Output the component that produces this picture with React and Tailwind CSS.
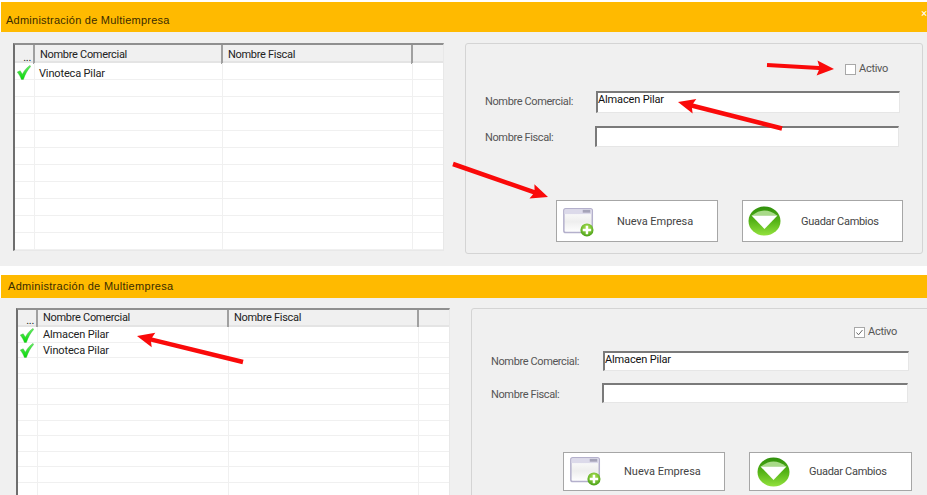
import { useId } from "react";

const font = "font-['Roboto','Liberation_Sans',Arial,sans-serif]";

function WindowPlusIcon({ className }) {
  const id = useId();
  return (
    <svg width="32" height="29" viewBox="0 0 34 31" className={`shrink-0 ${className}`}>
      <defs>
        <linearGradient id={id} x1="0" y1="0" x2="0" y2="1">
          <stop offset="0" stopColor="#ffffff" />
          <stop offset="0.55" stopColor="#eeeeee" />
          <stop offset="1" stopColor="#ffffff" />
        </linearGradient>
        <radialGradient id={id + "g"} cx="0.5" cy="0.35" r="0.7">
          <stop offset="0" stopColor="#b6e85a" />
          <stop offset="1" stopColor="#3f9a10" />
        </radialGradient>
      </defs>
      <rect x="0.8" y="0.8" width="30.4" height="25.4" rx="2" fill={`url(#${id})`} stroke="#b4b0cc" strokeWidth="1.6" />
      <rect x="1.5" y="1.5" width="29" height="5" fill="#dcdaea" />
      <rect x="21" y="2" width="8" height="3" fill="#a5a3b8" />
      <circle cx="25.5" cy="23.5" r="7" fill={`url(#${id}g)`} />
      <path d="M25.5 19v9M21 23.5h9" stroke="#ffffff" strokeWidth="2.6" />
    </svg>
  );
}

function GreenDownIcon() {
  const id = useId();
  return (
    <svg width="33" height="30" viewBox="0 0 33 30" className="shrink-0">
      <defs>
        <linearGradient id={id} x1="0" y1="0" x2="0" y2="1">
          <stop offset="0" stopColor="#2f8f0c" />
          <stop offset="0.5" stopColor="#55b316" />
          <stop offset="1" stopColor="#93e23e" />
        </linearGradient>
      </defs>
      <ellipse cx="16.5" cy="15" rx="16" ry="14.6" fill={`url(#${id})`} />
      <path d="M4 9.5Q16.5 -0.5 29 9.5Z" fill="#a8da88" />
      <path d="M3.5 9.5H29.5L16.5 23Z" fill="#ffffff" />
    </svg>
  );
}

function CheckIcon() {
  const id = useId();
  return (
    <svg width="14" height="15" viewBox="0 0 14 15" className="shrink-0">
      <defs>
        <linearGradient id={id} x1="0" y1="0" x2="0" y2="1">
          <stop offset="0" stopColor="#66f066" />
          <stop offset="1" stopColor="#06d806" />
        </linearGradient>
      </defs>
      <path d="M0.3 7L3.2 5.8L5.4 9.2C7 5.8 9.6 2.6 13 0.4L13.7 1.4C10.6 4.8 8.2 9 6.4 14.4H4.4C3.4 11.6 2 9.2 0.3 7Z" fill={`url(#${id})`} stroke="#30b030" strokeWidth="0.4" />
    </svg>
  );
}

function Arrow({ x1, y1, x2, y2, w = 4, hw = 15, hl = 16 }) {
  const len = Math.hypot(x2 - x1, y2 - y1);
  const ux = (x2 - x1) / len;
  const uy = (y2 - y1) / len;
  const nx = -uy;
  const ny = ux;
  const bx = x2 - ux * hl;
  const by = y2 - uy * hl;
  const pts = [
    [x1 + (nx * w) / 2, y1 + (ny * w) / 2],
    [bx + (nx * w) / 2, by + (ny * w) / 2],
    [bx + (nx * hw) / 2 - ux * 2, by + (ny * hw) / 2 - uy * 2],
    [x2, y2],
    [bx - (nx * hw) / 2 - ux * 2, by - (ny * hw) / 2 - uy * 2],
    [bx - (nx * w) / 2, by - (ny * w) / 2],
    [x1 - (nx * w) / 2, y1 - (ny * w) / 2],
  ];
  return <polygon points={pts.map((p) => p.join(",")).join(" ")} fill="#fa0a0a" />;
}

function TitleBar({ className, textClass, close }) {
  return (
    <div className={`ml-px flex items-center justify-between bg-[#ffba00] ${className}`}>
      <span className={`font-['Liberation_Sans',Arial,sans-serif] text-[11px] text-[#3a2c00] ${textClass}`}>
        Administración de Multiempresa
      </span>
      {close && <span className="mb-2 text-[11px] leading-none text-white">×</span>}
    </div>
  );
}

function DataGrid({ className, rows, rowClass, colsClass, headClass, headTextClass, rowCount, textClass, checkClass }) {
  const empty = Array.from({ length: rowCount - rows.length });
  return (
    <div className={`shrink-0 overflow-hidden border-t-2 border-l-2 border-r border-b border-t-[#8f8f8f] border-l-[#6e6e6e] border-r-[#e8e8e8] border-b-[#e8e8e8] bg-white ${className}`}>
      <div className={`grid ${colsClass} ${headClass} border-b-2 border-[#e4e4e4] bg-[#f0f0f0] text-[11px] tracking-[-0.3px] text-[#222]`}>
        <div className="flex items-end justify-end border-r-2 border-[#a0a0a0] pr-0.5 leading-[13px]">...</div>
        <div className={`flex items-center border-r-2 border-[#a0a0a0] pl-[5px] ${headTextClass}`}>Nombre Comercial</div>
        <div className={`flex items-center border-r-2 border-[#a0a0a0] pl-[5px] ${headTextClass}`}>Nombre Fiscal</div>
        <div />
      </div>
      {rows.map((name) => (
        <div key={name} className={`grid ${colsClass} ${rowClass} border-b border-[#f0f0f0] text-[11px] tracking-[-0.15px] text-[#222]`}>
          <div className={`flex items-center border-r border-[#f0f0f0] ${checkClass}`}><CheckIcon /></div>
          <div className={`flex items-center border-r border-[#f0f0f0] ${textClass}`}>{name}</div>
          <div className="border-r border-[#f0f0f0]" />
          <div />
        </div>
      ))}
      {empty.map((_, i) => (
        <div key={i} className={`grid ${colsClass} ${rowClass} border-b border-[#f0f0f0]`}>
          <div className="border-r border-[#f0f0f0]" />
          <div className="border-r border-[#f0f0f0]" />
          <div className="border-r border-[#f0f0f0]" />
          <div />
        </div>
      ))}
    </div>
  );
}

function Field({ label, value, className, labelClass, inputClass }) {
  return (
    <div className={`flex items-center ${className}`}>
      <span className={`text-[11px] tracking-[-0.38px] text-[#555] ${labelClass}`}>{label}</span>
      <div className={`flex items-center border-t-2 border-l-2 border-r border-b border-t-[#7a7a7a] border-l-[#7a7a7a] border-r-[#e6e6e6] border-b-[#e6e6e6] bg-white text-[11px] tracking-[-0.15px] text-[#111] ${inputClass}`}>
        {value}
      </div>
    </div>
  );
}

function ActionButton({ icon, label, className, labelClass }) {
  return (
    <div className={`flex items-center border border-[#a6a6a6] bg-white text-[11px] text-[#444] ${className}`}>
      {icon}
      <span className={labelClass}>{label}</span>
    </div>
  );
}

function Activo({ checked, className }) {
  return (
    <div className={`flex items-center justify-end gap-[3px] text-[11px] tracking-[-0.3px] text-[#555] ${className}`}>
      <span className="flex h-[11px] w-[11px] items-center justify-center border border-[#a8a8a8] bg-white">
        {checked && (
          <svg width="9" height="9" viewBox="0 0 9 9">
            <path d="M1.5 4.5L3.5 6.8L7.5 2" fill="none" stroke="#666" strokeWidth="1" />
          </svg>
        )}
      </span>
      <span>Activo</span>
    </div>
  );
}

export default function App() {
  return (
    <div className={`relative h-[495px] w-[927px] overflow-hidden bg-white pt-0.5 ${font}`}>
      <TitleBar className="h-[30px]" textClass="pt-1.5 pl-[5px] tracking-[0.24px]" close />
      <div className="flex h-[234px] items-start bg-[#f0f0f0] pt-[11px] pl-[13px]">
        <DataGrid
          className="h-[208px] w-[431px]"
          colsClass="grid-cols-[20px_188px_190px_1fr]"
          headClass="h-[18px]"
          headTextClass="pt-0.5"
          rowClass="h-[17px]"
          textClass="pt-[3px] pl-1"
          checkClass="pl-0.5"
          rows={["Vinoteca Pilar"]}
          rowCount={11}
        />
        <div className="ml-[21px] h-[211px] w-[458px] shrink-0 rounded-[3px] border border-[#d4d4d4] pt-[17px] pl-[19px]">
          <Activo className="mr-[34px]" />
          <Field className="mt-[13px] h-[22px]" label="Nombre Comercial:" value="Almacen Pilar" labelClass="w-[111px] pt-0.5" inputClass="h-[22px] w-[304px] pb-[3px]" />
          <Field className="mt-[13px] h-[21px]" label="Nombre Fiscal:" labelClass="w-[110px] pt-1" inputClass="h-[21px] w-[304px]" />
          <div className="mt-[53px] ml-[71px] flex gap-6">
            <ActionButton className="h-[42px] w-[162px] pl-1.5" icon={<WindowPlusIcon className="mt-[3px]" />} label="Nueva Empresa" labelClass="ml-[22px] pt-[3px] tracking-[-0.05px]" />
            <ActionButton className="h-[42px] w-[161px] pl-[5px]" icon={<GreenDownIcon />} label="Guadar Cambios" labelClass="ml-5 pt-[3px] tracking-[-0.3px]" />
          </div>
        </div>
      </div>

      <div className="h-[9px]" />

      <TitleBar className="h-[23px]" textClass="pl-[7px] tracking-[0.3px]" />
      <div className="flex h-[197px] items-start bg-[#f0f0f0] pt-2.5 pl-4">
        <DataGrid
          className="h-[190px] w-[434px]"
          colsClass="grid-cols-[20px_191px_190px_1fr]"
          headClass="h-[17px]"
          headTextClass="pt-0"
          rowClass="h-[15.6px]"
          textClass="pl-[5px]"
          checkClass="pl-0.5"
          rows={["Almacen Pilar", "Vinoteca Pilar"]}
          rowCount={11}
        />
        <div className="ml-[21px] h-[200px] w-[470px] shrink-0 rounded-[3px] border border-[#d4d4d4] pt-[15px] pl-[19px]">
          <Activo checked className="mr-[43px]" />
          <Field className="mt-2.5 h-5" label="Nombre Comercial:" value="Almacen Pilar" labelClass="w-[112px] pt-1" inputClass="h-5 w-[306px] pb-px" />
          <Field className="mt-3" label="Nombre Fiscal:" labelClass="w-[111px] pt-1" inputClass="h-5 w-[306px]" />
          <div className="mt-[49px] ml-[72px] flex gap-6">
            <ActionButton className="h-[39px] w-[162px] pl-1.5" icon={<WindowPlusIcon />} label="Nueva Empresa" labelClass="ml-[22px] pt-px" />
            <ActionButton className="h-[39px] w-[163px] pl-[7px]" icon={<GreenDownIcon />} label="Guadar Cambios" labelClass="ml-[19px] pt-px tracking-[-0.3px]" />
          </div>
        </div>
      </div>

      <svg width="927" height="495" viewBox="0 0 927 495" className="pointer-events-none absolute top-0 left-0">
        <Arrow x1={767} y1={65} x2={834} y2={69} w={4} hw={15} hl={15} />
        <Arrow x1={782} y1={128.5} x2={678} y2={102} w={4.5} hw={15} hl={15} />
        <Arrow x1={453} y1={164} x2={548} y2={197} w={4.5} hw={15} hl={15} />
        <Arrow x1={243} y1={362} x2={137} y2={336} w={4.5} hw={15} hl={15} />
      </svg>
    </div>
  );
}
